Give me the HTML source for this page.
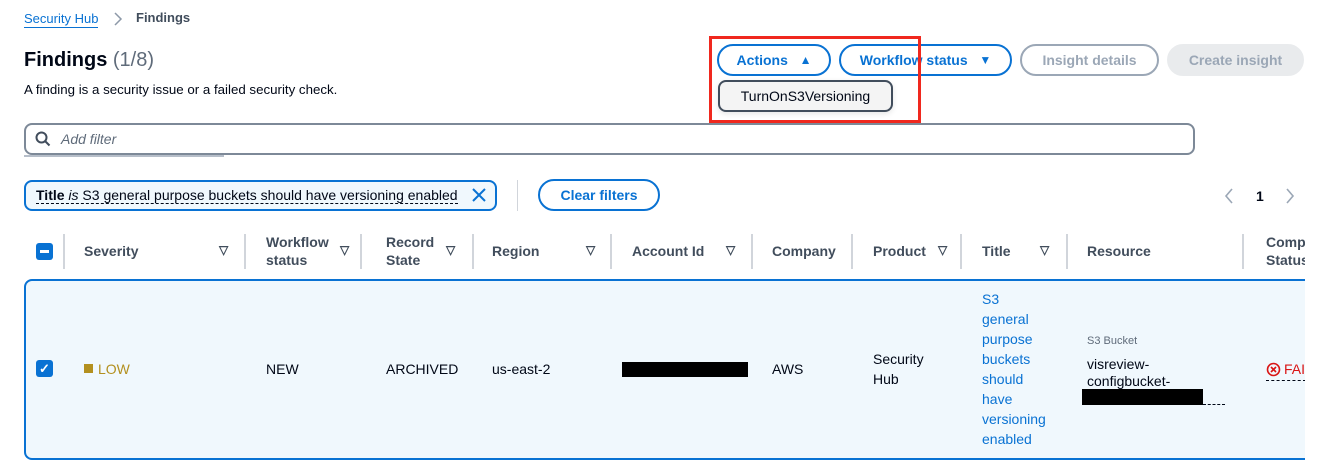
<!DOCTYPE html>
<html><head><meta charset="utf-8"><style>
*{box-sizing:border-box;margin:0;padding:0}
body{width:1329px;height:470px;overflow:hidden;background:#fff;font-family:"Liberation Sans",sans-serif;color:#000716;position:relative;font-size:14px}
.a{position:absolute;white-space:nowrap}
.btn{position:absolute;height:32px;border:2px solid #0972d3;border-radius:16px;color:#0972d3;font-weight:bold;font-size:14px;display:flex;align-items:center;justify-content:center}
.hd{position:absolute;font-weight:bold;color:#414d5c;font-size:14px;line-height:18px}
.sep{position:absolute;top:234px;width:2px;height:35px;background:#d1d5db}
.tri{position:absolute;font-size:12px;color:#414d5c;font-weight:bold}
.cell{position:absolute;font-size:14px;color:#000716;line-height:20px}
.blk{position:absolute;background:#000}
</style></head><body>
<div class="a" style="left:24px;top:10px;color:#0972d3;font-size:13px;border-bottom:1px solid #0972d3;line-height:17px">Security Hub</div>
<svg class="a" style="left:113px;top:12px" width="10" height="14" viewBox="0 0 10 14"><path d="M2 1l6 6-6 6" fill="none" stroke="#8d99a8" stroke-width="1.5"/></svg>
<div class="a" style="left:136px;top:10px;color:#414d5c;font-weight:bold;font-size:13px">Findings</div>
<div class="a" style="left:24px;top:49px;font-size:20px;font-weight:bold">Findings <span style="font-weight:normal;color:#5f6b7a">(1/8)</span></div>
<div class="a" style="left:24px;top:82px;font-size:13.3px;color:#000716">A finding is a security issue or a failed security check.</div>

<div class="btn" style="left:717px;top:44px;width:114px">Actions&nbsp;&nbsp;&nbsp;<span style="font-size:12px">▲</span></div>
<div class="btn" style="left:839px;top:44px;width:173px">Workflow status&nbsp;&nbsp;&nbsp;<span style="font-size:12px">▼</span></div>
<div class="btn" style="left:1020px;top:44px;width:139px;border-color:#9ba7b6;color:#9ba7b6">Insight details</div>
<div class="btn" style="left:1167px;top:44px;width:137px;border-color:#e9ebed;background:#e9ebed;color:#9ba7b6">Create insight</div>
<div class="a" style="left:709px;top:36px;width:212px;height:87px;border:3px solid #f0281e"></div>
<div class="a" style="left:718px;top:80px;width:175px;height:32px;border:2px solid #414d5c;border-radius:8px;background:#f4f4f4;font-size:14px;display:flex;align-items:center;justify-content:center;box-shadow:0 2px 6px rgba(0,0,0,.1)">TurnOnS3Versioning</div>

<div class="a" style="left:24px;top:123px;width:1171px;height:32px;border:2px solid #7d8998;border-radius:8px"></div>
<div class="a" style="left:24px;top:155px;width:200px;height:2px;background:#b6bec9"></div>
<svg class="a" style="left:35px;top:131px" width="16" height="16" viewBox="0 0 16 16"><circle cx="6.5" cy="6.5" r="5" fill="none" stroke="#414d5c" stroke-width="2"/><line x1="10" y1="10" x2="14.5" y2="14.5" stroke="#414d5c" stroke-width="2"/></svg>
<div class="a" style="left:61px;top:131px;font-style:italic;color:#5f6b7a;font-size:14px">Add filter</div>

<div class="a" style="left:24px;top:180px;width:473px;height:31px;border:2px solid #0972d3;border-radius:8px;background:#f0f8fd"></div>
<div class="a" style="left:36px;top:187px;font-size:14px;border-bottom:1px dashed #000716;line-height:16px"><b>Title</b> <i>is</i> S3 general purpose buckets should have versioning enabled</div>
<svg class="a" style="left:471px;top:187px" width="16" height="16" viewBox="0 0 16 16"><path d="M2 2l12 12M14 2L2 14" stroke="#0972d3" stroke-width="2"/></svg>
<div class="a" style="left:517px;top:180px;width:1px;height:31px;background:#d1d5db"></div>
<div class="btn" style="left:538px;top:179px;width:122px">Clear filters</div>
<svg class="a" style="left:1224px;top:188px" width="10" height="16" viewBox="0 0 10 16"><path d="M8 1L2 8l6 7" fill="none" stroke="#9ba7b6" stroke-width="1.6"/></svg>
<div class="a" style="left:1256px;top:188px;font-size:14px;font-weight:bold">1</div>
<svg class="a" style="left:1285px;top:188px" width="10" height="16" viewBox="0 0 10 16"><path d="M2 1l6 7-6 7" fill="none" stroke="#9ba7b6" stroke-width="1.6"/></svg>

<div class="a" style="left:36px;top:243px;width:17px;height:17px;background:#0972d3;border-radius:3px"><div style="position:absolute;left:4px;top:7px;width:9px;height:3px;background:#fff"></div></div>
<div class="sep" style="left:63px"></div>
<div class="hd" style="left:84px;top:242px">Severity</div><div class="tri" style="left:219px;top:243px">▽</div>
<div class="sep" style="left:244px"></div>
<div class="hd" style="left:266px;top:233px">Workflow<br>status</div><div class="tri" style="left:340px;top:243px">▽</div>
<div class="sep" style="left:360px"></div>
<div class="hd" style="left:386px;top:233px">Record<br>State</div><div class="tri" style="left:446px;top:243px">▽</div>
<div class="sep" style="left:472px"></div>
<div class="hd" style="left:492px;top:242px">Region</div><div class="tri" style="left:586px;top:243px">▽</div>
<div class="sep" style="left:610px"></div>
<div class="hd" style="left:632px;top:242px">Account Id</div><div class="tri" style="left:726px;top:243px">▽</div>
<div class="sep" style="left:751px"></div>
<div class="hd" style="left:772px;top:242px">Company</div>
<div class="sep" style="left:851px"></div>
<div class="hd" style="left:873px;top:242px">Product</div><div class="tri" style="left:938px;top:243px">▽</div>
<div class="sep" style="left:960px"></div>
<div class="hd" style="left:982px;top:242px">Title</div><div class="tri" style="left:1040px;top:243px">▽</div>
<div class="sep" style="left:1066px"></div>
<div class="hd" style="left:1087px;top:242px">Resource</div>
<div class="sep" style="left:1242px"></div>
<div class="hd" style="left:1266px;top:233px">Compliance<br>Status</div>

<div class="a" style="left:24px;top:279px;width:1305px;height:181px;border:2px solid #0972d3;border-right:none;border-radius:8px 0 0 8px;background:#f0f8fd"></div>
<div class="a" style="left:36px;top:360px;width:17px;height:17px;background:#0972d3;border-radius:3px;color:#fff;font-size:13px;text-align:center;line-height:17px;font-weight:bold">✓</div>
<div class="a" style="left:84px;top:364px;width:9px;height:9px;background:#b3901f"></div>
<div class="cell" style="left:98px;top:359px;color:#b3901f">LOW</div>
<div class="cell" style="left:266px;top:359px">NEW</div>
<div class="cell" style="left:386px;top:359px">ARCHIVED</div>
<div class="cell" style="left:492px;top:359px">us-east-2</div>
<div class="blk" style="left:622px;top:362px;width:126px;height:15px"></div>
<div class="cell" style="left:772px;top:359px">AWS</div>
<div class="cell" style="left:873px;top:349px">Security<br>Hub</div>
<div class="cell" style="left:982px;top:289px;color:#0972d3">S3<br>general<br>purpose<br>buckets<br>should<br>have<br>versioning<br>enabled</div>
<div class="cell" style="left:1087px;top:331px;font-size:11px;color:#5f6b7a">S3 Bucket</div>
<div class="cell" style="left:1087px;top:356px;line-height:17px">visreview-<br>configbucket-</div>
<div class="blk" style="left:1082px;top:389px;width:121px;height:16px"></div>
<div class="a" style="left:1203px;top:404px;width:22px;border-top:1px dashed #000716"></div>
<svg class="a" style="left:1266px;top:362px" width="15" height="15" viewBox="0 0 15 15"><circle cx="7.5" cy="7.5" r="6" fill="none" stroke="#d91515" stroke-width="1.6"/><path d="M5 5l5 5M10 5l-5 5" stroke="#d91515" stroke-width="1.6"/></svg>
<div class="cell" style="left:1284px;top:359px;color:#d91515">FAILED</div>
<div class="a" style="left:1266px;top:380px;width:40px;border-top:1px dashed #000716"></div>
<div class="a" style="left:1305px;top:225px;width:24px;height:245px;background:#fff"></div>
</body></html>
